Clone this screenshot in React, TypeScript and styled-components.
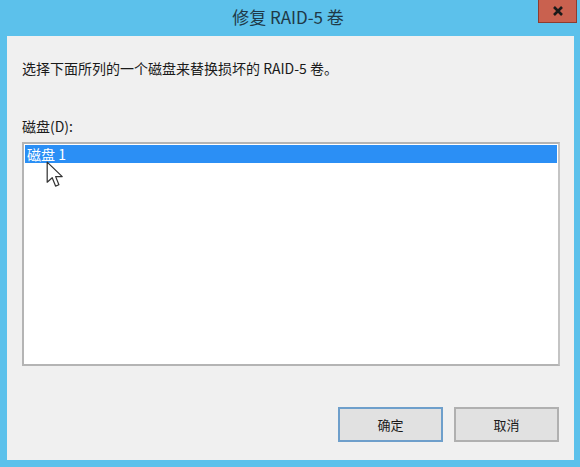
import React from "react";
import styled, { createGlobalStyle } from "styled-components";

const GlobalStyle = createGlobalStyle`
  html, body { margin: 0; padding: 0; background: #5cc1eb; }
  body { font-family: "Noto Sans CJK SC", "Noto Sans", sans-serif; }
`;

const Window = styled.div`
  width: 580px;
  height: 467px;
  background: #5cc1eb;
  display: flex;
  flex-direction: column;
  box-sizing: border-box;
`;

const TitleBar = styled.div`
  height: 36px;
  display: grid;
  grid-template-columns: 1fr auto 1fr;
  flex-shrink: 0;
`;

const Title = styled.div`
  grid-column: 2;
  align-self: center;
  font-size: 17px;
  color: #1f3947;
  padding-bottom: 3px;
  padding-right: 4px;
`;

const CloseButton = styled.div`
  grid-column: 3;
  justify-self: end;
  align-self: start;
  width: 39px;
  height: 23px;
  margin-right: 3px;
  background: #c9614f;
  border: 1px solid #8d3c2f;
  border-top: none;
  display: flex;
  align-items: center;
  justify-content: center;
  box-sizing: border-box;
`;

const Client = styled.div`
  flex: 1;
  margin: 0 6px 7px 7px;
  background: #f0f0f0;
  padding: 22px 15px 18px 15px;
  display: flex;
  flex-direction: column;
  position: relative;
`;

const Instruction = styled.div`
  font-size: 14px;
  line-height: 20px;
  color: #1a1a1a;
`;

const Label = styled.div`
  margin-top: 38px;
  font-size: 14px;
  line-height: 20px;
  color: #1a1a1a;
`;

const ListBox = styled.div`
  margin-top: 6px;
  width: 538px;
  height: 224px;
  box-sizing: border-box;
  border: 2px solid #b4b4b4;
  border-right-color: #c4c4c4;
  background: #ffffff;
  padding: 1px;
`;

const ListItem = styled.div<{ $selected?: boolean }>`
  height: 18px;
  line-height: 18px;
  padding-left: 2px;
  font-size: 14px;
  color: ${(p) => (p.$selected ? "#ffffff" : "#1a1a1a")};
  background: ${(p) => (p.$selected ? "#2b8ff5" : "transparent")};
`;

const ButtonRow = styled.div`
  margin-top: auto;
  display: flex;
  justify-content: flex-end;
  gap: 11px;
`;

const Button = styled.div<{ $default?: boolean }>`
  width: 105px;
  height: 35px;
  box-sizing: border-box;
  background: #e1e1e1;
  border: 2px solid ${(p) => (p.$default ? "#6e9fcb" : "#b0b0b0")};
  display: flex;
  align-items: center;
  justify-content: center;
  font-size: 13px;
  color: #1a1a1a;
`;

const Cursor = styled.svg`
  position: absolute;
  left: 39px;
  top: 125px;
  width: 18px;
  height: 29px;
`;

export default function App() {
  return (
    <>
      <GlobalStyle />
      <Window>
        <TitleBar>
          <Title>修复 RAID-5 卷</Title>
          <CloseButton>
            <svg width="12" height="10" viewBox="0 0 12 10">
              <path d="M2 1 L10 9 M10 1 L2 9" stroke="#1a1a1a" strokeWidth="2.6" />
            </svg>
          </CloseButton>
        </TitleBar>
        <Client>
          <Instruction>选择下面所列的一个磁盘来替换损坏的 RAID-5 卷。</Instruction>
          <Label>磁盘(D):</Label>
          <ListBox>
            <ListItem $selected>磁盘 1</ListItem>
          </ListBox>
          <ButtonRow>
            <Button $default>确定</Button>
            <Button>取消</Button>
          </ButtonRow>
          <Cursor viewBox="0 0 16 26">
            <path
              d="M1 1 L1 19 L5.5 15 L8.5 22.5 L11.5 21.3 L8.6 14 L14.5 14 Z"
              fill="#ffffff"
              stroke="#333333"
              strokeWidth="1.1"
              strokeLinejoin="round"
            />
          </Cursor>
        </Client>
      </Window>
    </>
  );
}
